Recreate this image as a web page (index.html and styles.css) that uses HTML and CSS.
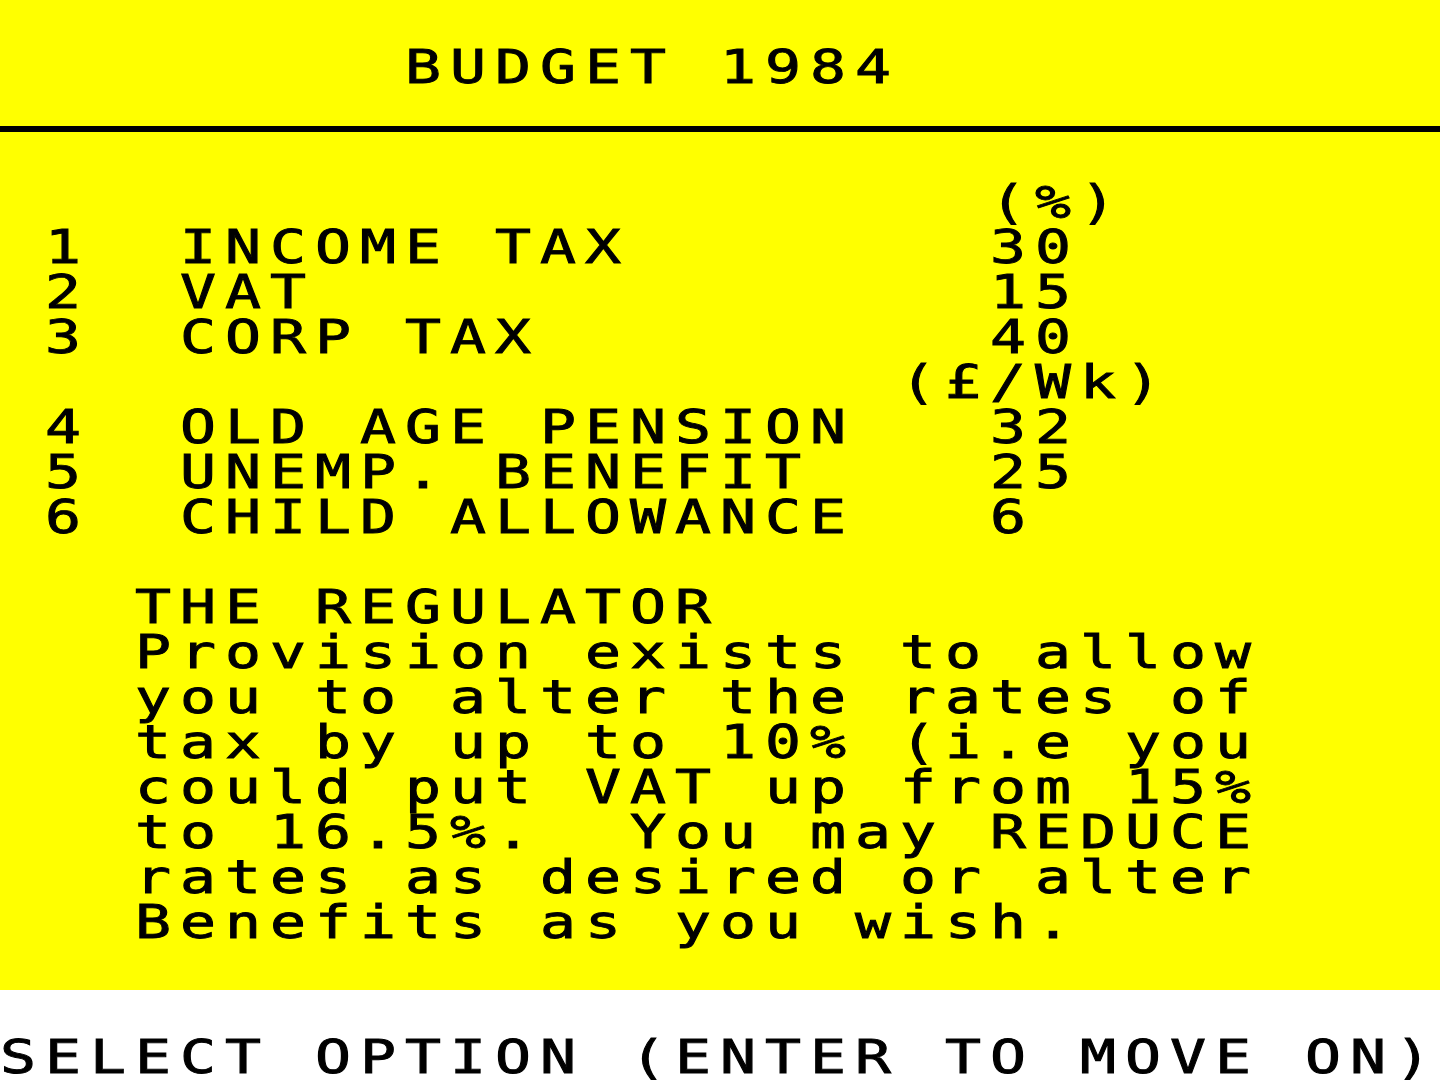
FILE: index.html
```html
<!DOCTYPE html>
<html lang="en">
<head>
<meta charset="utf-8">
<title>BUDGET 1984</title>
<link rel="stylesheet" href="styles.css">
</head>
<body>
<div class="screen">
  <div class="paper">
    <div class="row"></div>
    <div class="row">         BUDGET 1984</div>
    <div class="rule-row"><div class="rule"></div></div>
    <div class="row"></div>
    <div class="row">                      (%)</div>
    <div class="row"> 1  INCOME TAX        30</div>
    <div class="row"> 2  VAT               15</div>
    <div class="row"> 3  CORP TAX          40</div>
    <div class="row">                    (£/Wk)</div>
    <div class="row"> 4  OLD AGE PENSION   32</div>
    <div class="row"> 5  UNEMP. BENEFIT    25</div>
    <div class="row"> 6  CHILD ALLOWANCE   6</div>
    <div class="row"></div>
    <div class="row">   THE REGULATOR</div>
    <div class="row">   Provision exists to allow</div>
    <div class="row">   you to alter the rates of</div>
    <div class="row">   tax by up to 10% (i.e you</div>
    <div class="row">   could put VAT up from 15%</div>
    <div class="row">   to 16.5%.  You may REDUCE</div>
    <div class="row">   rates as desired or alter</div>
    <div class="row">   Benefits as you wish.</div>
    <div class="row"></div>
  </div>
  <div class="border">
    <div class="row"></div>
    <div class="row">SELECT OPTION (ENTER TO MOVE ON)</div>
  </div>
</div>
</body>
</html>
```

FILE: styles.css
```css
html, body {
  margin: 0;
  padding: 0;
  background: #ffffff;
}

.screen {
  width: 1440px;
  height: 1080px;
  overflow: hidden;
  display: flex;
  flex-direction: column;
  font-family: "DejaVu Sans Mono", "Liberation Mono", monospace;
  font-weight: normal;
  font-size: 46px;
  color: #000000;
  -webkit-text-stroke: 0.9px #000000;
}

.paper {
  background: #ffff00;
  height: 990px;
  display: flex;
  flex-direction: column;
}

.border {
  background: #ffffff;
  height: 90px;
  display: flex;
  flex-direction: column;
}

.row {
  height: 45px;
  line-height: 45px;
  white-space: pre;
  width: 1107px;
  letter-spacing: calc(45px / 1.3 - 1ch);
  transform: scaleX(1.3);
  transform-origin: 0 0;
}

.rule-row {
  height: 45px;
  display: flex;
  flex-direction: column;
  justify-content: flex-end;
  padding-bottom: 3px;
  box-sizing: border-box;
}

.rule {
  height: 6px;
  background: #000000;
}
```
